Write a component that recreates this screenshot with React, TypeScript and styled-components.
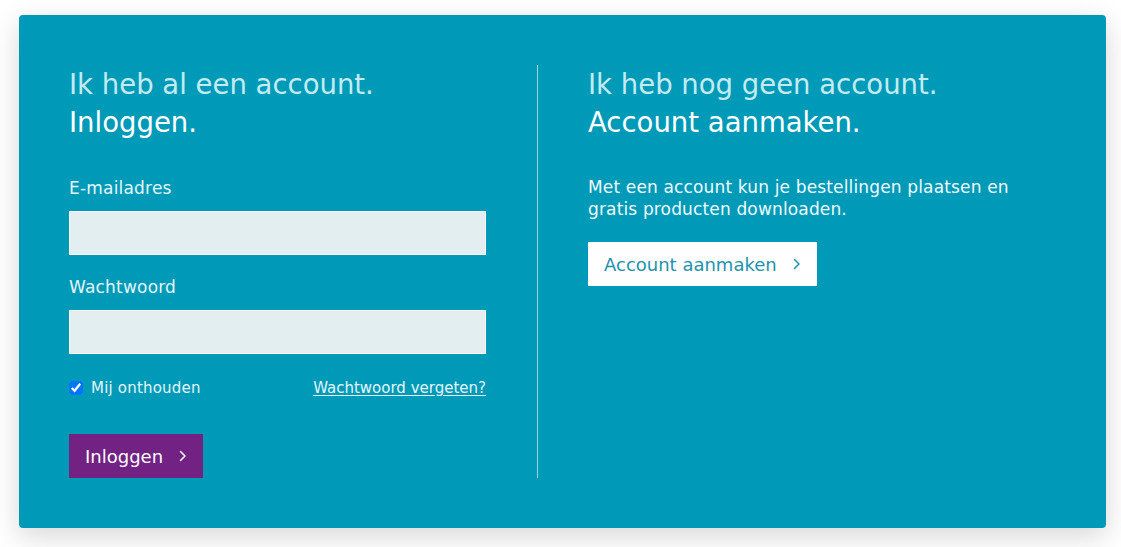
import React from "react";
import styled, { createGlobalStyle } from "styled-components";

const Global = createGlobalStyle`
  html, body { margin: 0; padding: 0; background: #ffffff; }
  body { font-family: "DejaVu Sans", "Noto Sans", sans-serif; }
  * { box-sizing: border-box; }
`;

const Page = styled.div`
  padding: 15px 15px 19px 19px;
`;

const Card = styled.div`
  background: #009ab9;
  border-radius: 4px;
  box-shadow: 0 8px 28px rgba(0, 0, 0, 0.16);
  height: 513px;
  padding: 50px 50px;
  display: flex;
  color: #ffffff;
`;

const LeftCol = styled.div`
  width: 469px;
  padding-right: 51px;
  border-right: 1px solid rgba(255, 255, 255, 0.6);
  display: flex;
  flex-direction: column;
`;

const RightCol = styled.div`
  flex: 1;
  padding-left: 50px;
  display: flex;
  flex-direction: column;
`;

const Heading = styled.h2`
  margin: 0;
  font-weight: 400;
  font-size: 27.5px;
  line-height: 38px;
`;

const Lead = styled.span`
  display: block;
  color: #c3ebf1;
`;

const Strong = styled.span`
  display: block;
  color: #ffffff;
`;

const Form = styled.form`
  display: flex;
  flex-direction: column;
  margin-top: 36px;
`;

const Label = styled.label`
  font-size: 17px;
  letter-spacing: 0.2px;
  line-height: 22px;
  color: #e4f6f9;
  margin-bottom: 12px;
`;

const Input = styled.input`
  height: 44px;
  width: 100%;
  background: #e2eef0;
  border: 1px solid #ffffff;
  margin-bottom: 21px;
  outline: none;
  font: inherit;
`;

const OptionsRow = styled.div`
  display: flex;
  justify-content: space-between;
  align-items: center;
  margin-top: 3px;
  font-size: 15px;
  line-height: 20px;
`;

const Remember = styled.label`
  display: flex;
  align-items: center;
  gap: 8px;
  color: #e4f6f9;
  letter-spacing: 0.2px;
  input {
    margin: 0;
    width: 14px;
    height: 14px;
  }
`;

const Forgot = styled.a`
  color: #e4f6f9;
  text-decoration: underline;
  text-underline-offset: 2px;
`;

const Button = styled.button<{ $variant: "primary" | "light" }>`
  display: inline-flex;
  align-items: center;
  gap: 16px;
  align-self: flex-start;
  height: 44px;
  padding: 0 16px 0 16px;
  border: none;
  border-radius: 0;
  font-family: inherit;
  font-size: 18px;
  cursor: pointer;
  background: ${(p) => (p.$variant === "primary" ? "#722282" : "#ffffff")};
  color: ${(p) => (p.$variant === "primary" ? "#ffffff" : "#1e93ad")};
`;

const LoginButton = styled(Button)`
  margin-top: 36px;
`;

const Text = styled.p`
  margin: 35px 0 0;
  font-size: 17px;
  letter-spacing: 0.15px;
  line-height: 22px;
  color: #f0fafc;
  max-width: 440px;
`;

const CreateButton = styled(Button)`
  margin-top: 22px;
`;

const Chevron = () => (
  <svg width="8" height="12" viewBox="0 0 8 12" fill="none">
    <polyline points="1.5,1.5 6,6 1.5,10.5" stroke="currentColor" strokeWidth="1.5" strokeLinecap="round" strokeLinejoin="round" />
  </svg>
);

export default function App() {
  return (
    <>
      <Global />
      <Page>
        <Card>
          <LeftCol>
            <Heading>
              <Lead>Ik heb al een account.</Lead>
              <Strong>Inloggen.</Strong>
            </Heading>
            <Form onSubmit={(e) => e.preventDefault()}>
              <Label htmlFor="email">E-mailadres</Label>
              <Input id="email" type="email" />
              <Label htmlFor="password">Wachtwoord</Label>
              <Input id="password" type="password" />
              <OptionsRow>
                <Remember>
                  <input type="checkbox" defaultChecked />
                  Mij onthouden
                </Remember>
                <Forgot href="#">Wachtwoord vergeten?</Forgot>
              </OptionsRow>
              <LoginButton $variant="primary" type="submit">
                Inloggen
                <Chevron />
              </LoginButton>
            </Form>
          </LeftCol>
          <RightCol>
            <Heading>
              <Lead>Ik heb nog geen account.</Lead>
              <Strong>Account aanmaken.</Strong>
            </Heading>
            <Text>Met een account kun je bestellingen plaatsen en gratis producten downloaden.</Text>
            <CreateButton $variant="light" type="button">
              Account aanmaken
              <Chevron />
            </CreateButton>
          </RightCol>
        </Card>
      </Page>
    </>
  );
}
